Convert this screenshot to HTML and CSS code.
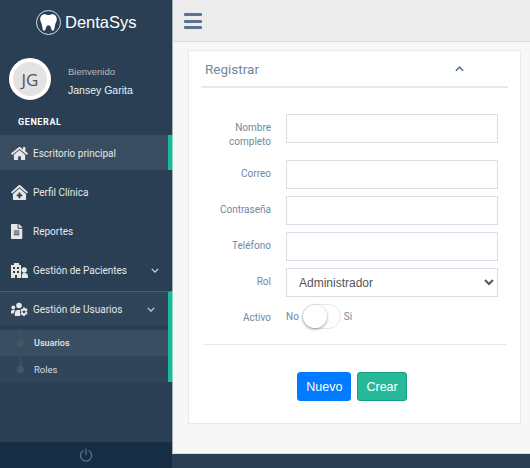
FILE: index.html
```html
<!DOCTYPE html>
<html lang="es">
<head>
    <meta charset="UTF-8">
    <meta name="viewport" content="width=device-width, initial-scale=1.0">
    <title>DentaSys</title>
    <link rel="stylesheet" href="styles.css">
</head>
<body>
    <aside class="sidebar">
        <div class="brand">
            <span class="brand-logo">
                <svg viewBox="0 0 24 24" width="19" height="19"><path d="M7 1.500c2 0 3.400 1 5 1s3-1 5-1c3.200 0 5.500 2.800 5.500 6.500 0 3-1.700 4.500-2.200 7-.5 2.800-.8 7.500-3 7.500-2.300 0-1.500-7-5.300-7s-3 7-5.300 7c-2.200 0-2.500-4.700-3-7.500-.5-2.500-2.200-4-2.200-7C1.500 4.300 3.800 1.500 7 1.500z" fill="#fff"/></svg>
            </span>
            <span class="brand-name">DentaSys</span>
        </div>
        <div class="profile">
            <div class="avatar">JG</div>
            <div class="profile-info">
                <span class="welcome">Bienvenido</span>
                <span class="user-name">Jansey Garita</span>
            </div>
        </div>
        <h3 class="menu-title">GENERAL</h3>
        <nav class="menu">
            <a class="menu-item active">
                <svg class="menu-icon" viewBox="0 0 576 512"><path d="M280.37 148.26L96 300.11V464a16 16 0 0 0 16 16l112.06-.29a16 16 0 0 0 15.92-16V368a16 16 0 0 1 16-16h64a16 16 0 0 1 16 16v95.64a16 16 0 0 0 16 16.05L464 480a16 16 0 0 0 16-16V300L295.67 148.26a12.19 12.19 0 0 0-15.3 0zM571.6 251.47L488 182.56V44.05a12 12 0 0 0-12-12h-56a12 12 0 0 0-12 12v72.61L318.47 43a48 48 0 0 0-61 0L4.34 251.47a12 12 0 0 0-1.6 16.9l25.5 31A12 12 0 0 0 45.15 301l235.22-193.74a12.19 12.19 0 0 1 15.3 0L530.9 301a12 12 0 0 0 16.9-1.6l25.5-31a12 12 0 0 0-1.7-16.93z"/></svg>
                Escritorio principal
            </a>
            <a class="menu-item">
                <svg class="menu-icon" viewBox="0 0 576 512"><path d="M288 115L69.47 307.71c-1.62 1.46-3.69 2.14-5.47 3.35V496a16 16 0 0 0 16 16h416a16 16 0 0 0 16-16V311.1c-1.7-1.16-3.72-1.82-5.26-3.2zm96 261a8 8 0 0 1-8 8h-56v56a8 8 0 0 1-8 8h-48a8 8 0 0 1-8-8v-56h-56a8 8 0 0 1-8-8v-48a8 8 0 0 1 8-8h56v-56a8 8 0 0 1 8-8h48a8 8 0 0 1 8 8v56h56a8 8 0 0 1 8 8zm186.69-139.72l-255.94-226a39.85 39.85 0 0 0-53.45 0l-256 226a16 16 0 0 0-1.21 22.6L25.5 282.7a16 16 0 0 0 22.6 1.21L277.42 81.63a16 16 0 0 1 21.17 0L527.91 283.9a16 16 0 0 0 22.6-1.21l21.4-23.82a16 16 0 0 0-1.22-22.59z"/></svg>
                Perfil Clínica
            </a>
            <a class="menu-item">
                <svg class="menu-icon" viewBox="0 0 384 512" preserveAspectRatio="xMinYMid"><path d="M224 136V0H24C10.700 0 0 10.700 0 24v464c0 13.300 10.700 24 24 24h336c13.300 0 24-10.700 24-24V160H248c-13.200 0-24-10.800-24-24zm64 236c0 6.600-5.400 12-12 12H108c-6.600 0-12-5.400-12-12v-8c0-6.600 5.400-12 12-12h168c6.600 0 12 5.400 12 12v8zm0-64c0 6.600-5.400 12-12 12H108c-6.600 0-12-5.400-12-12v-8c0-6.600 5.400-12 12-12h168c6.600 0 12 5.400 12 12v8zm0-72v8c0 6.600-5.400 12-12 12H108c-6.600 0-12-5.400-12-12v-8c0-6.600 5.400-12 12-12h168c6.600 0 12 5.400 12 12zm96-114.100v6.100H256V0h6.100c6.400 0 12.500 2.500 17 7l97.900 98c4.500 4.500 7 10.600 7 16.900z"/></svg>
                Reportes
            </a>
            <a class="menu-item">
                <svg class="menu-icon" viewBox="0 0 17 15"><path fill-rule="evenodd" d="M3 0h5v2h2v13H0V2h3zM2 4v2h2V4zm4 0v2h2V4zM2 8v2h2V8zm4 0v2h2V8zM4 12v3h2v-3z"/><circle cx="13.200" cy="7" r="2.700"/><path d="M10.800 15v-3c0-1.300 1-2 2-2h1c1.600 0 3.200 1.200 3.200 3v2z"/></svg>
                Gestión de Pacientes
                <svg class="menu-arrow" viewBox="0 0 10 6"><path d="M1 1l4 4 4-4"/></svg>
            </a>
            <div class="menu-group">
                <a class="menu-item">
                    <svg class="menu-icon" viewBox="0 0 17 14"><circle cx="2.300" cy="5" r="1.900"/><circle cx="8" cy="3" r="2.800"/><path d="M0 11V9.200C0 8 .8 7.400 1.800 7.400h1.400c.4 0 .7.100 1 .3C3.200 8.600 2.800 9.700 2.800 11zM3.800 13.500v-2.600c0-2 1.200-3.300 3-3.300h2.400l-.2 1v3.800l.6 1.100z"/><path fill-rule="evenodd" d="M12 5h2l.3 1.300 1.300-.5 1 1.700-1 .9v1.200l1 .9-1 1.700-1.300-.5L14 13.500h-2l-.3-1.300-1.300.5-1-1.700 1-.9V8.900l-1-.9 1-1.700 1.300.5zm1 2.900a1.400 1.400 0 1 0 0 2.800 1.400 1.400 0 0 0 0-2.800z"/></svg>
                    Gestión de Usuarios
                    <svg class="menu-arrow" viewBox="0 0 10 6"><path d="M1 1l4 4 4-4"/></svg>
                </a>
                <ul class="submenu">
                    <li class="submenu-item current">Usuarios</li>
                    <li class="submenu-item">Roles</li>
                </ul>
            </div>
        </nav>
        <div class="sidebar-footer">
            <svg viewBox="0 0 14 14" width="14" height="14"><path d="M4 2.800a5.600 5.600 0 1 0 6 0M7 1v5.500" fill="none" stroke="#5A738E" stroke-width="1.300" stroke-linecap="round"/></svg>
        </div>
    </aside>

    <div class="main">
        <header class="topbar">
            <div class="hamburger"><span></span><span></span><span></span></div>
        </header>
        <main class="content">
            <section class="panel">
                <div class="panel-title">
                    <h2>Registrar</h2>
                    <svg class="collapse" viewBox="0 0 10 6"><path d="M1 5l4-4 4 4"/></svg>
                </div>
                <form class="form">
                    <div class="form-row">
                        <label>Nombre completo</label>
                        <input type="text">
                    </div>
                    <div class="form-row">
                        <label>Correo</label>
                        <input type="text">
                    </div>
                    <div class="form-row">
                        <label>Contraseña</label>
                        <input type="text">
                    </div>
                    <div class="form-row">
                        <label>Teléfono</label>
                        <input type="text">
                    </div>
                    <div class="form-row">
                        <label>Rol</label>
                        <select><option>Administrador</option></select>
                    </div>
                    <div class="form-row">
                        <label>Activo</label>
                        <div class="switch-wrap">
                            <span>No</span>
                            <span class="switch"><span class="knob"></span></span>
                            <span>Si</span>
                        </div>
                    </div>
                    <div class="divider"></div>
                    <div class="actions">
                        <button type="button" class="btn btn-blue">Nuevo</button>
                        <button type="button" class="btn btn-green">Crear</button>
                    </div>
                </form>
            </section>
        </main>
        <footer class="bottom-bar"></footer>
    </div>
</body>
</html>
```

FILE: styles.css
```css
* {
    box-sizing: border-box;
}
html, body {
    height: 100%;
}
body {
    margin: 0;
    display: flex;
    overflow: hidden;
    font-family: Roboto, "Liberation Sans", sans-serif;
    background-color: #2A3F54;
}

/* Sidebar */
.sidebar {
    position: relative;
    z-index: 1;
    width: 172px;
    flex: none;
    display: flex;
    flex-direction: column;
    background-color: #2A3F54;
    color: #ECF0F1;
}
.brand {
    height: 44px;
    display: flex;
    align-items: center;
    padding-left: 36px;
    gap: 4px;
}
.brand-logo {
    width: 25px;
    height: 25px;
    border: 1px solid #d5dbe0;
    border-radius: 50%;
    display: flex;
    align-items: center;
    justify-content: center;
}
.brand-name {
    font-family: "Liberation Sans", Arial, sans-serif;
    font-size: 16.500px;
    color: #fff;
}
.profile {
    display: flex;
    align-items: center;
    padding: 14px 0 0 9px;
    gap: 17px;
}
.avatar {
    width: 42px;
    height: 42px;
    border: 4px solid #fff;
    border-radius: 50%;
    background-color: #e3e3e3;
    color: #555;
    font-family: "Open Sans", sans-serif;
    font-size: 17px;
    display: flex;
    align-items: center;
    justify-content: center;
}
.profile-info {
    display: flex;
    flex-direction: column;
    gap: 7px;
    padding-top: 4px;
}
.welcome {
    font-family: "Liberation Sans", Arial, sans-serif;
    font-size: 9.500px;
    color: #BAB8B8;
}
.user-name {
    font-family: "Liberation Sans", Arial, sans-serif;
    font-size: 10.500px;
    color: #ECF0F1;
}
.menu-title {
    margin: 16px 0 0 18px;
    font-size: 9px;
    line-height: 12px;
    font-weight: 700;
    letter-spacing: .6px;
    color: #fff;
}
.menu {
    margin-top: 7px;
}
.menu-item {
    height: 39px;
    display: flex;
    align-items: center;
    padding-left: 11px;
    font-size: 10px;
    color: #E7E7E7;
}
.menu-item.active {
    height: 35px;
    margin-bottom: 3px;
    padding-top: 2px;
    background-color: rgba(255, 255, 255, .07);
    border-right: 4px solid #1ABB9C;
    box-shadow: 1px 0 0 #8fdccd;
}
.menu-icon {
    width: 17px;
    height: 15px;
    margin-right: 5px;
    flex: none;
    fill: #E7E7E7;
    overflow: visible;
}
.menu-arrow {
    width: 8px;
    height: 5px;
    margin-left: auto;
    margin-right: 13px;
    fill: none;
    stroke: #d5dbe0;
    stroke-width: 1.500;
}
.menu-group {
    margin-top: 1px;
    border-top: 1px solid #4a5c6e;
    border-right: 4px solid #1ABB9C;
    box-shadow: 1px 0 0 #8fdccd;
    background-color: rgba(255, 255, 255, .03);
}
.menu-group > .menu-item {
    height: 33px;
    padding-top: 1px;
}
.submenu {
    list-style: none;
    margin: 0;
    padding: 0;
    border-top: 5px solid rgba(0, 0, 0, .08);
}
.submenu-item {
    position: relative;
    height: 26px;
    display: flex;
    align-items: center;
    padding-left: 34px;
    font-size: 9.500px;
    color: #d5dde5;
}
.submenu-item.current {
    background-color: rgba(255, 255, 255, .05);
    font-size: 9px;
    font-weight: 500;
    color: #E7E7E7;
}
/* timeline line and dot in front of the sub items */
.submenu-item::before {
    content: "";
    position: absolute;
    left: 20px;
    top: -1px;
    width: 1px;
    height: 14px;
    background-color: #425668;
}
.submenu-item::after {
    content: "";
    position: absolute;
    left: 17px;
    top: 10px;
    width: 7px;
    height: 7px;
    border-radius: 50%;
    background-color: #425668;
}
.sidebar-footer {
    margin-top: auto;
    height: 26px;
    background-color: #172D44;
    display: flex;
    align-items: center;
    justify-content: center;
}

/* Main */
.main {
    flex: 1;
    min-width: 0;
    display: flex;
    flex-direction: column;
    background-color: #F7F7F7;
    border-left: 1px solid #a5adb6;
}
.topbar {
    height: 42px;
    flex: none;
    padding: 13px 0 0 11px;
    background-color: #EDEDED;
    border-bottom: 1px solid #D9DEE4;
}
.hamburger {
    width: 18px;
    height: 16px;
    display: flex;
    flex-direction: column;
    justify-content: space-between;
}
.hamburger span {
    height: 3px;
    border-radius: 1px;
    background-color: #5A738E;
}
.content {
    flex: 1;
    padding: 8px 9px 0 15px;
}
.panel {
    height: 374px;
    padding: 0 12px;
    background-color: #fff;
    border: 1px solid #E6E9ED;
}
.panel-title {
    height: 37px;
    display: flex;
    align-items: center;
    padding: 1px 4px 0;
    border-bottom: 2px solid #E6E9ED;
}
.panel-title h2 {
    margin: 0;
    font-size: 13.500px;
    font-weight: 400;
    color: #73879C;
}
.collapse {
    width: 9px;
    height: 6px;
    margin-left: 196px;
    fill: none;
    stroke: #5A738E;
    stroke-width: 1.800;
}
.form {
    padding-top: 26px;
}
.form-row {
    display: grid;
    grid-template-columns: 70px 212px;
    column-gap: 15px;
    align-items: start;
    margin-bottom: 7px;
}
.form-row label {
    padding: 7px 0 4px;
    text-align: right;
    font-size: 10px;
    line-height: 14px;
    color: #73879C;
}
.form-row input, .form-row select {
    width: 212px;
    height: 29px;
    margin: 0;
    background-color: #fff;
    border: 1px solid #D9DEE4;
    border-radius: 0;
    font-family: "Liberation Sans", Arial, sans-serif;
    font-size: 12px;
    color: #555;
}
.form-row select {
    padding-left: 8px;
}
.switch-wrap {
    display: flex;
    align-items: center;
    gap: 3px;
    font-size: 10px;
    color: #73879C;
}
.switch {
    width: 39px;
    height: 25px;
    border: 1px solid #e6e6e6;
    border-radius: 13px;
    background-color: #fff;
    display: block;
}
.knob {
    display: block;
    width: 24px;
    height: 23px;
    border-radius: 50%;
    background-color: #fff;
    box-shadow: 0 1px 3px rgba(0, 0, 0, .4);
}
.divider {
    margin: 15px 2px 0;
    border-top: 1px solid #E6E9ED;
}
.actions {
    display: flex;
    justify-content: center;
    gap: 6px;
    margin-top: 27px;
    padding-right: 5px;
}
.btn {
    height: 29px;
    padding: 0 8px;
    border-radius: 3px;
    font-family: "Liberation Sans", Arial, sans-serif;
    font-size: 12.500px;
    color: #fff;
}
.btn-blue {
    background-color: #007BFF;
    border: 1px solid #007BFF;
}
.btn-green {
    background-color: #26B99A;
    border: 1px solid #169F85;
}
.bottom-bar {
    height: 15px;
    flex: none;
    margin-left: -1px;
    background-color: #2A3F54;
    border-top: 1px solid #D9DEE4;
}
```
